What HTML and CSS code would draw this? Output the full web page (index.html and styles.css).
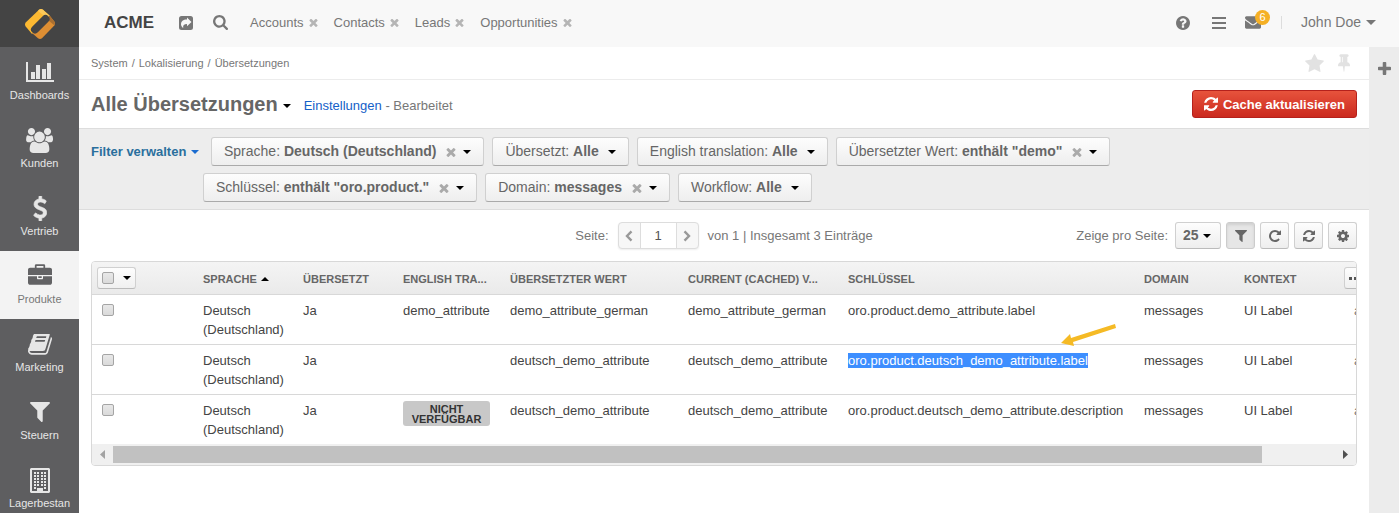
FILE: index.html
```html
<!DOCTYPE html>
<html lang="de">
<head>
<meta charset="utf-8">
<title>Alle Übersetzungen</title>
<link rel="stylesheet" href="styles.css">
</head>
<body>
<svg class="sprite" aria-hidden="true">
  <symbol id="i-times" viewBox="302 238 1188 1316"><path d="M1490 1322q0 40-28 68l-136 136q-28 28-68 28t-68-28l-294-294-294 294q-28 28-68 28t-68-28l-136-136q-28-28-28-68t28-68l294-294-294-294q-28-28-28-68t28-68l136-136q28-28 68-28t68 28l294 294 294-294q28-28 68-28t68 28l136 136q28 28 28 68t-28 68l-294 294 294 294q28 28 28 68z"/></symbol>
  <symbol id="i-plus" viewBox="192 128 1408 1408"><path d="M1600 736v192q0 40-28 68t-68 28h-416v416q0 40-28 68t-68 28h-192q-40 0-68-28t-28-68v-416h-416q-40 0-68-28t-28-68v-192q0-40 28-68t68-28h416v-416q0-40 28-68t68-28h192q40 0 68 28t28 68v416h416q40 0 68 28t28 68z"/></symbol>
  <symbol id="i-search" viewBox="64 128 1664 1664"><path d="M1216 832q0-185-131.5-316.5t-316.5-131.5-316.5 131.5-131.5 316.5 131.5 316.5 316.5 131.5 316.5-131.5 131.5-316.5zm512 832q0 52-38 90t-90 38q-54 0-90-38l-343-342q-179 124-399 124-143 0-273.5-55.5t-225-150-150-225-55.5-273.5 55.5-273.5 150-225 225-150 273.5-55.5 273.5 55.5 225 150 150 225 55.5 273.5q0 220-124 399l343 343q37 37 37 90z"/></symbol>
  <symbol id="i-share" viewBox="0 0 14 14"><path fill-rule="evenodd" d="M2.500 0h9A2.500 2.500 0 0 1 14 2.500v9a2.500 2.500 0 0 1-2.500 2.500h-9A2.500 2.500 0 0 1 0 11.500v-9A2.500 2.500 0 0 1 2.500 0zM8 1.500v2C4 3.500 2 5.300 2 8.200c0 1.500.8 2.800 2.200 3.800C3.800 9 5 8 8 8v2.300L12.500 6z"/></symbol>
  <symbol id="i-help" viewBox="128 128 1536 1536"><path d="M1024 1376v-192q0-14-9-23t-23-9h-192q-14 0-23 9t-9 23v192q0 14 9 23t23 9h192q14 0 23-9t9-23zm256-672q0-88-55.500-163t-138.500-116-170-41q-243 0-371 213-15 24 8 42l132 100q7 6 19 6 16 0 25-12 53-68 86-92 34-24 86-24 48 0 85.500 26t37.500 59q0 38-20 61t-68 45q-63 28-115.500 86.500t-52.500 125.500v36q0 14 9 23t23 9h192q14 0 23-9t9-23q0-19 21.500-49.500t54.500-49.500q32-18 49-28.500t46-35 44.500-48 28-60.500 12.500-81zm384 192q0 209-103 385.500t-279.500 279.500-385.500 103-385.500-103-279.500-279.500-103-385.500 103-385.500 279.500-279.500 385.500-103 385.500 103 279.500 279.500 103 385.500z"/></symbol>
  <symbol id="i-bars" viewBox="0 0 14 12"><path d="M0 0h14v2H0zM0 5h14v2H0zM0 10h14v2H0z"/></symbol>
  <symbol id="i-mail" viewBox="0 256 1792 1408"><path d="M1792 710v794q0 66-47 113t-113 47h-1472q-66 0-113-47t-47-113v-794q44 49 101 87 362 246 497 345 57 42 92.500 65.500t94.500 48 110 24.500h2q51 0 110-24.500t94.500-48 92.500-65.500q170-123 498-345 57-39 100-87zm0-294q0 79-49 151t-122 123q-376 261-468 325-10 7-42.500 31t-54 38.500-52 32.500-57.500 27-50 9h-2q-23 0-50-9t-57.500-27-52-32.500-54-38.500-42.500-31q-91-64-262-182.500t-205-142.500q-62-42-117-115.500t-55-136.500q0-78 41.500-130t118.500-52h1472q65 0 112.500 47t47.500 113z"/></symbol>
  <symbol id="i-star" viewBox="64 32 1664 1590"><path d="M1728 647q0 22-26 48l-363 354 86 500q1 7 1 20 0 21-10.500 35.500t-30.500 14.500q-19 0-40-12l-449-236-449 236q-22 12-40 12-21 0-31.500-14.500t-10.500-35.500q0-6 2-20l86-500-364-354q-25-27-25-48 0-37 56-46l502-73 225-455q19-41 49-41t49 41l225 455 502 73q56 9 56 46z"/></symbol>
  <symbol id="i-pin" viewBox="320 128 1152 1664"><path d="M800 864v-448q0-14-9-23t-23-9-23 9-9 23v448q0 14 9 23t23 9 23-9 9-23zm672 352q0 26-19 45t-45 19h-429l-51 483q-2 12-10.500 20.500t-20.500 8.500h-1q-27 0-32-27l-76-485h-404q-26 0-45-19t-19-45q0-123 78.500-221.500t177.500-98.500v-512q-52 0-90-38t-38-90 38-90 90-38h640q52 0 90 38t38 90-38 90-90 38v512q99 0 177.500 98.500t78.500 221.500z"/></symbol>
  <symbol id="i-refresh" viewBox="128 128 1536 1536"><path d="M1639 1056q0 5-1 7-64 268-268 434.500t-478 166.500q-146 0-282.500-55t-243.500-157l-129 129q-19 19-45 19t-45-19-19-45v-448q0-26 19-45t45-19h448q26 0 45 19t19 45-19 45l-137 137q71 66 161 102t187 36q134 0 250-65t186-179q11-17 53-117 8-23 30-23h192q13 0 22.500 9.500t9.500 22.500zm25-800v448q0 26-19 45t-45 19h-448q-26 0-45-19t-19-45 19-45l138-138q-148-137-349-137-134 0-250 65t-186 179q-11 17-53 117-8 23-30 23h-199q-13 0-22.500-9.500t-9.500-22.500v-7q65-268 270-434.500t480-166.500q146 0 284 55.500t245 156.500l130-129q19-19 45-19t45 19 19 45z"/></symbol>
  <symbol id="i-repeat" viewBox="128 128 1536 1536"><path d="M1664 256v448q0 26-19 45t-45 19h-448q-42 0-59-40-17-39 14-69l138-138q-148-137-349-137-104 0-198.500 40.500t-163.500 109.500-109.500 163.500-40.500 198.500 40.500 198.500 109.500 163.500 163.500 109.500 198.500 40.500q119 0 225-52t179-147q7-10 23-12 15 0 25 9l137 138q9 8 9.500 20.500t-7.500 22.500q-109 132-264 204.500t-327 72.500q-156 0-298-61t-245-164-164-245-61-298 61-298 164-245 245-164 298-61q147 0 284.500 55.500t244.500 156.500l130-129q29-31 70-14 39 17 39 59z"/></symbol>
  <symbol id="i-cog" viewBox="128 128 1536 1536"><path d="M1152 896q0-106-75-181t-181-75-181 75-75 181 75 181 181 75 181-75 75-181zm512-109v222q0 12-8 23t-20 13l-185 28q-19 54-39 91 35 50 107 138 10 12 10 25t-9 23q-27 37-99 108t-94 71q-12 0-26-9l-138-108q-44 23-91 38-16 136-29 186-7 28-36 28h-222q-14 0-24.500-8.500t-11.500-21.500l-28-184q-49-16-90-37l-141 107q-10 9-25 9-14 0-25-11-126-114-165-168-7-10-7-23 0-12 8-23 15-21 51-66.500t54-70.500q-27-50-41-99l-183-27q-13-2-21-12.500t-8-23.500v-222q0-12 8-23t19-13l186-28q14-46 39-92-40-57-107-138-10-12-10-24 0-10 9-23 26-36 98.500-107.500t94.500-71.500q13 0 26 10l138 107q44-23 91-38 16-136 29-186 7-28 36-28h222q14 0 24.500 8.500t11.500 21.500l28 184q49 16 90 37l142-107q9-9 24-9 13 0 25 10 129 119 165 170 7 8 7 22 0 12-8 23-15 21-51 66.500t-54 70.500q26 50 41 98l183 28q13 2 21 12.500t8 23.500z"/></symbol>
  <symbol id="i-filter" viewBox="190 256 1412 1408"><path d="M1595 295q17 41-14 70l-493 493v742q0 42-39 59-13 5-25 5-27 0-45-19l-256-256q-19-19-19-45v-486l-493-493q-31-29-14-70 17-39 59-39h1280q42 0 59 39z"/></symbol>
  <symbol id="i-chart" viewBox="0 0 28 22"><path d="M0 1h2v18h26v2H0zM5 11h4v7H5zM10 4h4v14h-4zM16 8h4v10h-4zM21 2h4v16h-4z"/></symbol>
  <symbol id="i-users" viewBox="64 0 1920 1792"><path d="M657 896q-162 5-265 128h-134q-82 0-138-40.500t-56-118.500q0-353 124-353 6 0 43.500 21t97.500 42.500 119 21.500q67 0 133-23-5 37-5 66 0 159 93 256zm1071 637q0 120-73 189.500t-194 69.500h-874q-121 0-194-69.500t-73-189.500q0-53 3.500-103.500t14-109 26.500-108.500 43-97.500 62-81 85.500-53.500 111.500-20q10 0 43 21.500t73 48 107 48 135 21.500 135-21.500 107-48 73-48 43-21.500q61 0 111.500 20t85.500 53.500 62 81 43 97.500 26.500 108.500 14 109 3.500 103.500zm-1024-1277q0 106-75 181t-181 75-181-75-75-181 75-181 181-75 181 75 75 181zm704 384q0 159-112.500 271.500t-271.500 112.500-271.500-112.500-112.500-271.500 112.500-271.500 271.500-112.500 271.500 112.500 112.500 271.500zm576 225q0 78-56 118.500t-138 40.500h-134q-103-123-265-128 93-97 93-256 0-29-5-66 66 23 133 23 59 0 119-21.500t97.500-42.500 43.500-21q124 0 124 353zm-128-609q0 106-75 181t-181 75-181-75-75-181 75-181 181-75 181 75 75 181z"/></symbol>
  <symbol id="i-dollar" viewBox="390 0 980 1792"><path stroke="currentColor" stroke-width="50" d="M1362 1185q0 153-99.500 263.500t-258.500 136.500v175q0 14-9 23t-23 9h-135q-13 0-22.500-9.500t-9.500-22.500v-175q-66-9-127.500-31t-101.500-44.500-74-48-46.500-37.500-17.500-18q-17-21-2-41l103-135q7-10 23-12 15-2 24 9l2 2q113 99 243 125 37 8 74 8 81 0 142.500-43t61.500-122q0-28-15-53t-33.500-42-58.500-37.500-66-32-80-32.500q-39-16-61.500-25t-61.500-26.500-62.500-31-56.500-35.500-53.500-42.500-43.500-49-35.500-58-21-66.500-8.500-78q0-138 98-242t255-134v-180q0-13 9.500-22.500t22.500-9.500h135q14 0 23 9t9 23v176q57 6 110.500 23t87 33.500 63.500 37.500 39 29 15 14q17 18 5 38l-81 146q-8 15-23 16-14 3-27-7-3-3-14.500-12t-39-26.500-58.500-32-74.500-26-85.500-11.500q-95 0-155 43t-60 111q0 26 8.500 48t29.500 41.500 39.500 33 56 31 60.500 27 70 27.500q53 20 81 31.500t76 35 75.500 42.500 62 50 53 63.500 31.500 76.500 13 94z"/></symbol>
  <symbol id="i-case" viewBox="0 0 1792 1536"><path d="M640 256h512v-128h-512v128zm1152 640v480q0 66-47 113t-113 47h-1472q-66 0-113-47t-47-113v-480h672v160q0 26 19 45t45 19h320q26 0 45-19t19-45v-160h672zm-768 0v128h-256v-128h256zm768-480v384h-1792v-384q0-66 47-113t113-47h352v-160q0-40 28-68t68-28h576q40 0 68 28t28 68v160h352q66 0 113 47t47 113z"/></symbol>
  <symbol id="i-book" viewBox="64 240 1664 1430"><path d="M1703 478q40 57 18 129l-275 906q-19 64-76.500 107.500t-122.500 43.500h-923q-77 0-148.500-53.500t-99.500-131.500q-24-67-2-127 0-4 3-27t4-37q1-8-3-21.500t-3-19.500q2-11 8-21t16.500-23.500 16.500-23.500q23-38 45-91.500t30-91.500q3-10 .5-30t-.5-28q3-11 17-28t17-23q21-36 42-92t25-90q1-9-2.500-32t.5-28q4-13 22-30.500t22-22.500q19-26 42.500-84.500t27.500-96.500q1-8-3-25.500t-2-26.500q2-8 9-18t18-23 17-21q8-12 16.500-30.500t15-35 16-36 19.500-32 26.500-23.500 36-11.500 47.500 5.500l-1 3q38-9 51-9h761q74 0 114 56t18 130l-274 906q-36 119-71.500 153.500t-128.500 34.500h-869q-27 0-38 15-11 16-1 43 24 70 144 70h923q29 0 56-15.500t35-41.500l300-987q7-22 5-57 38 15 59 43zm-1064 2q-4 13 2 22.500t20 9.500h608q13 0 25.500-9.500t16.500-22.500l21-64q4-13-2-22.500t-20-9.500h-608q-13 0-25.500 9.500t-16.500 22.500zm-83 256q-4 13 2 22.500t20 9.500h608q13 0 25.500-9.500t16.500-22.500l21-64q4-13-2-22.500t-20-9.500h-608q-13 0-25.500 9.500t-16.500 22.500z"/></symbol>
  <symbol id="i-building" viewBox="0 0 20 25"><path fill-rule="evenodd" d="M1 0h18l1 1v23l-1 1H1l-1-1V1zM2 2v21h5v-3h6v3h5V2z"/><path d="M4 4h2v2H4zM7 4h2v2H7zM11 4h2v2h-2zM14 4h2v2h-2zM4 7h2v2H4zM7 7h2v2H7zM11 7h2v2h-2zM14 7h2v2h-2zM4 10h2v2H4zM7 10h2v2H7zM11 10h2v2h-2zM14 10h2v2h-2zM4 13h2v2H4zM7 13h2v2H7zM11 13h2v2h-2zM14 13h2v2h-2zM4 16h2v2H4zM7 16h2v2H7zM11 16h2v2h-2zM14 16h2v2h-2zM4 19h2v2H4zM14 19h2v2h-2z"/></symbol>
  <symbol id="i-caret" viewBox="0 0 8 4"><path d="M0 0h8L4 4z"/></symbol>
  <symbol id="i-left" viewBox="0 0 8 12"><path d="M6.500 1.300 2 6l4.500 4.700" fill="none" stroke="currentColor" stroke-width="2.400"/></symbol>
  <symbol id="i-right" viewBox="0 0 8 12"><path d="M1.500 1.300 6 6l-4.500 4.700" fill="none" stroke="currentColor" stroke-width="2.400"/></symbol>
</svg>

<div class="app">
  <aside class="sidebar">
    <a class="logo" href="#" aria-label="Startseite">
      <svg width="30" height="30" viewBox="0 0 30 30">
        <path fill="#fcb932" d="M14 .8q2-1.500 4 0L25 7 7 25 .7 17.500q-1.400-2 0-4z"/>
        <path fill="#fcc95a" d="M14 .8q2-1.500 4 0L25 7l-3 2-9-7z"/>
        <path fill="#dd8e33" d="M25 7l4.300 5.500q1.400 2 0 4L17 29.200q-2 1.500-4 0L7 24z"/>
        <path fill="#a96f31" d="m24 6 5.300 6.500q1 2 .2 4L23 11z"/>
        <path stroke="#444" stroke-width="8" stroke-linecap="round" d="M20.500 10 10 20.500"/>
      </svg>
    </a>
    <nav class="menu">
      <a class="menu-item" href="#"><span class="menu-icon"><svg width="28" height="22"><use href="#i-chart"/></svg></span><span class="menu-label">Dashboards</span></a>
      <a class="menu-item" href="#"><span class="menu-icon"><svg width="27" height="25"><use href="#i-users"/></svg></span><span class="menu-label">Kunden</span></a>
      <a class="menu-item" href="#"><span class="menu-icon"><svg width="14" height="25"><use href="#i-dollar"/></svg></span><span class="menu-label">Vertrieb</span></a>
      <a class="menu-item active" href="#"><span class="menu-icon case"><svg width="24" height="21"><use href="#i-case"/></svg></span><span class="menu-label">Produkte</span></a>
      <a class="menu-item" href="#"><span class="menu-icon"><svg width="24" height="21"><use href="#i-book"/></svg></span><span class="menu-label">Marketing</span></a>
      <a class="menu-item" href="#"><span class="menu-icon"><svg width="20" height="20"><use href="#i-filter"/></svg></span><span class="menu-label">Steuern</span></a>
      <a class="menu-item" href="#"><span class="menu-icon"><svg width="20" height="25"><use href="#i-building"/></svg></span><span class="menu-label">Lagerbestand</span></a>
    </nav>
  </aside>

  <div class="main">
    <header class="topbar">
      <a class="brand" href="#">ACME</a>
      <button class="icon-btn share" aria-label="Teilen"><svg width="14" height="14"><use href="#i-share"/></svg></button>
      <button class="icon-btn search" aria-label="Suche"><svg width="15" height="15"><use href="#i-search"/></svg></button>
      <nav class="pins">
        <span class="pin"><a href="#">Accounts</a><button class="icon-btn" aria-label="Entfernen"><svg width="9" height="9"><use href="#i-times"/></svg></button></span>
        <span class="pin"><a href="#">Contacts</a><button class="icon-btn" aria-label="Entfernen"><svg width="9" height="9"><use href="#i-times"/></svg></button></span>
        <span class="pin"><a href="#">Leads</a><button class="icon-btn" aria-label="Entfernen"><svg width="9" height="9"><use href="#i-times"/></svg></button></span>
        <span class="pin"><a href="#">Opportunities</a><button class="icon-btn" aria-label="Entfernen"><svg width="9" height="9"><use href="#i-times"/></svg></button></span>
      </nav>
      <div class="tools">
        <button class="icon-btn" aria-label="Hilfe"><svg width="14" height="14"><use href="#i-help"/></svg></button>
        <button class="icon-btn" aria-label="Menü"><svg width="14" height="12"><use href="#i-bars"/></svg></button>
        <button class="icon-btn mail" aria-label="E-Mails"><svg width="16" height="13"><use href="#i-mail"/></svg><span class="badge">6</span></button>
        <button class="user">John Doe<svg width="10" height="5"><use href="#i-caret"/></svg></button>
      </div>
    </header>

    <div class="body">
      <main class="content">
        <div class="crumbs">
          <nav class="crumb-list"><a href="#">System</a><span>/</span><a href="#">Lokalisierung</a><span>/</span><a href="#">Übersetzungen</a></nav>
          <button class="icon-btn" aria-label="Favorit"><svg width="19" height="18"><use href="#i-star"/></svg></button>
          <button class="icon-btn" aria-label="Anheften"><svg width="12" height="18"><use href="#i-pin"/></svg></button>
        </div>

        <div class="title-row">
          <h1>Alle Übersetzungen</h1>
          <button class="icon-btn title-caret" aria-label="Ansichten"><svg width="8" height="4"><use href="#i-caret"/></svg></button>
          <p class="view-state"><a href="#">Einstellungen</a> - Bearbeitet</p>
          <button class="btn-danger"><svg width="14" height="14"><use href="#i-refresh"/></svg>Cache aktualisieren</button>
        </div>

        <section class="filters">
          <button class="manage">Filter verwalten<svg width="8" height="4"><use href="#i-caret"/></svg></button>
          <div class="filter-list">
            <div class="filter"><button class="filter-text">Sprache: <b>Deutsch (Deutschland)</b></button><button class="filter-clear" aria-label="Zurücksetzen"><svg width="10" height="10"><use href="#i-times"/></svg></button><svg width="8" height="4"><use href="#i-caret"/></svg></div>
            <div class="filter"><button class="filter-text">Übersetzt: <b>Alle</b></button><svg width="8" height="4"><use href="#i-caret"/></svg></div>
            <div class="filter"><button class="filter-text">English translation: <b>Alle</b></button><svg width="8" height="4"><use href="#i-caret"/></svg></div>
            <div class="filter"><button class="filter-text">Übersetzter Wert: <b>enthält "demo"</b></button><button class="filter-clear" aria-label="Zurücksetzen"><svg width="10" height="10"><use href="#i-times"/></svg></button><svg width="8" height="4"><use href="#i-caret"/></svg></div>
            <div class="filter"><button class="filter-text">Schlüssel: <b>enthält "oro.product."</b></button><button class="filter-clear" aria-label="Zurücksetzen"><svg width="10" height="10"><use href="#i-times"/></svg></button><svg width="8" height="4"><use href="#i-caret"/></svg></div>
            <div class="filter"><button class="filter-text">Domain: <b>messages</b></button><button class="filter-clear" aria-label="Zurücksetzen"><svg width="10" height="10"><use href="#i-times"/></svg></button><svg width="8" height="4"><use href="#i-caret"/></svg></div>
            <div class="filter"><button class="filter-text">Workflow: <b>Alle</b></button><svg width="8" height="4"><use href="#i-caret"/></svg></div>
          </div>
        </section>

        <div class="toolbar">
          <div class="pager">
            <label for="page">Seite:</label>
            <div class="pager-group">
              <button aria-label="Zurück"><svg width="8" height="12"><use href="#i-left"/></svg></button>
              <input id="page" type="text" value="1">
              <button aria-label="Weiter"><svg width="8" height="12"><use href="#i-right"/></svg></button>
            </div>
            <span>von 1 | Insgesamt 3 Einträge</span>
          </div>
          <div class="grid-actions">
            <label for="size">Zeige pro Seite:</label>
            <div class="select-wrap">
              <select id="size"><option>25</option></select>
              <svg width="8" height="4"><use href="#i-caret"/></svg>
            </div>
            <button class="tool pressed" aria-label="Filter"><svg width="12" height="12"><use href="#i-filter"/></svg></button>
            <button class="tool" aria-label="Aktualisieren"><svg width="12" height="12"><use href="#i-repeat"/></svg></button>
            <button class="tool" aria-label="Zurücksetzen"><svg width="12" height="12"><use href="#i-refresh"/></svg></button>
            <button class="tool" aria-label="Einstellungen"><svg width="12" height="12"><use href="#i-cog"/></svg></button>
          </div>
        </div>

        <div class="grid">
          <div class="grid-scroll">
            <table>
              <colgroup>
                <col class="c-check"><col class="c-s"><col class="c-s"><col class="c-en"><col class="c-value"><col class="c-current"><col class="c-key"><col class="c-s"><col class="c-s"><col class="c-actions">
              </colgroup>
              <thead>
                <tr>
                  <th><span class="check-all"><input type="checkbox" aria-label="Alle auswählen"><svg width="8" height="4"><use href="#i-caret"/></svg></span></th>
                  <th>Sprache <svg class="sort" width="8" height="4"><use href="#i-caret"/></svg></th>
                  <th>Übersetzt</th>
                  <th>English tra...</th>
                  <th>Übersetzter Wert</th>
                  <th>Current (cached) v...</th>
                  <th>Schlüssel</th>
                  <th>Domain</th>
                  <th>Kontext</th>
                  <th><button class="more" aria-label="Aktionen"><svg width="22" height="3" viewBox="0 0 22 3"><path d="M0 0h3v3H0zM5 0h3v3H5zM10 0h3v3h-3z"/></svg></button></th>
                </tr>
              </thead>
              <tbody>
                <tr>
                  <td><input type="checkbox" aria-label="Zeile 1"></td>
                  <td>Deutsch (Deutschland)</td><td>Ja</td><td>demo_attribute</td><td>demo_attribute_german</td><td>demo_attribute_german</td>
                  <td>oro.product.demo_attribute.label</td><td>messages</td><td>UI Label</td><td class="row-action">a</td>
                </tr>
                <tr>
                  <td><input type="checkbox" aria-label="Zeile 2"></td>
                  <td>Deutsch (Deutschland)</td><td>Ja</td><td></td><td>deutsch_demo_attribute</td><td>deutsch_demo_attribute</td>
                  <td class="key"><span class="selected">oro.product.deutsch_demo_attribute.label</span>
                    <svg class="arrow" width="57" height="22" viewBox="0 0 57 22"><path fill="#f5ba25" d="m0 19 9-9 1 4L54 0l1 4-43 14 1 4z"/></svg></td>
                  <td>messages</td><td>UI Label</td><td class="row-action">a</td>
                </tr>
                <tr>
                  <td><input type="checkbox" aria-label="Zeile 3"></td>
                  <td>Deutsch (Deutschland)</td><td>Ja</td><td><span class="na">Nicht verfügbar</span></td><td>deutsch_demo_attribute</td><td>deutsch_demo_attribute</td>
                  <td>oro.product.deutsch_demo_attribute.description</td><td>messages</td><td>UI Label</td><td class="row-action">a</td>
                </tr>
              </tbody>
            </table>
          </div>
          <div class="scrollbar">
            <svg width="5" height="9" viewBox="0 0 5 9"><path fill="#a3a3a3" d="M5 0v9L0 4.500z"/></svg>
            <div class="track"><div class="thumb"></div></div>
            <svg width="5" height="9" viewBox="0 0 5 9"><path fill="#505050" d="M0 0v9l5-4.500z"/></svg>
          </div>
        </div>
      </main>
      <aside class="rightbar"><button class="icon-btn" aria-label="Hinzufügen"><svg width="13" height="13"><use href="#i-plus"/></svg></button></aside>
    </div>
  </div>
</div>
</body>
</html>
```
FILE: styles.css
```css
* { box-sizing: border-box; }
body {
  margin: 0;
  font: 13px/19px "Liberation Sans", Arial, sans-serif;
  color: #777;
  background: #fff;
}
.sprite { position: absolute; width: 0; height: 0; }
svg { display: block; flex: none; fill: currentColor; }
a { color: inherit; text-decoration: none; }
button, input, select { font: inherit; color: inherit; margin: 0; }
button { cursor: pointer; padding: 0; border: 0; background: none; }
.icon-btn { display: flex; }

.app { display: flex; height: 100vh; overflow: hidden; }

/* sidebar */
.sidebar { flex: none; width: 79px; background: #5e5e60; color: #e6e6e6; }
.logo { display: flex; align-items: center; justify-content: center; height: 47px; background: #444; }
.menu-item { display: block; min-height: 68px; padding: 11px 8px 13px; text-align: center; }
.menu-icon { display: flex; align-items: center; justify-content: center; height: 28px; }
.menu-icon.case { padding-bottom: 4px; }
.menu-label { display: block; padding-top: 2px; font-size: 11px; line-height: 14px; word-break: break-all; }
.menu-item.active { background: #f3f3f3; color: #636365; }
.menu-item.active .menu-label { color: #777; }

/* top bar */
.main { flex: 1; min-width: 0; display: flex; flex-direction: column; }
.topbar { display: flex; align-items: center; height: 47px; padding: 0 23px 2px 25px; background: #f8f8f8; }
.brand { font-size: 17px; font-weight: bold; color: #444; }
.share { margin-left: 25px; color: #777; }
.search { margin-left: 20px; color: #777; }
.pins { display: flex; gap: 16px; margin-left: 22px; }
.pin { display: flex; align-items: center; gap: 5px; }
.pin .icon-btn { color: #b5b5b5; }
.tools { display: flex; align-items: center; gap: 22px; margin-left: auto; color: #777; }
.mail { position: relative; }
.badge {
  position: absolute; left: 10px; top: -6px;
  width: 15px; height: 15px; border-radius: 50%;
  background: #f5b025; color: #fff; font-size: 11px; line-height: 15px;
}
.tools .mail { margin-left: -3px; }
.user {
  display: flex; align-items: center; gap: 5px;
  padding-left: 19px; margin-left: -2px; border-left: 1px solid #ddd;
  font-size: 14px; line-height: 13px;
}

/* page */
.body { flex: 1; display: flex; min-height: 0; }
.content { flex: 1; min-width: 0; }
.rightbar { flex: none; width: 30px; padding-top: 15px; background: #ececec; color: #777; }
.rightbar .icon-btn { margin: 0 auto; }
.crumbs { display: flex; align-items: center; height: 33px; padding: 0 19px 0 12px; border-bottom: 1px solid #ececec; color: #e2e2e2; }
.crumb-list { display: flex; gap: 4px; flex: 1; font-size: 11px; color: #777; }
.crumbs .icon-btn + .icon-btn { margin-left: 14px; }
.title-row { display: flex; align-items: center; height: 48px; padding: 0 12px; }
h1 { margin: 0; font-size: 20px; line-height: 24px; color: #666; }
.title-caret { margin: 3px 0 0 5px; color: #000; }
.view-state { margin: 2px auto 0 13px; }
.view-state a { color: #1460c8; }
.btn-danger {
  display: flex; align-items: center; gap: 5px; height: 28px; padding: 0 11px;
  border: 1px solid #b5211c; border-radius: 3px;
  background: linear-gradient(#e7533c, #cb2a1f);
  color: #fff; font-weight: bold;
}

/* filters */
.filters { display: flex; align-items: flex-start; padding: 8px 12px 7px; border-top: 1px solid #ddd; border-bottom: 1px solid #ddd; background: #ededed; }
.manage { display: flex; align-items: center; gap: 5px; width: 112px; flex: none; height: 29px; font-weight: bold; color: #2a6f9d; white-space: nowrap; }
.manage svg { color: #1a6cd0; }
.filter-list { display: flex; flex-wrap: wrap; gap: 7px 8px; }
.filter {
  display: flex; align-items: center; height: 29px; padding: 0 12px;
  border: 1px solid #d0d0d0; border-bottom-color: #aaa; border-radius: 3px;
  background: linear-gradient(#fdfdfd, #eee);
  font-size: 14px; color: #666;
}
.filter:first-child { margin-left: 8px; }
.filter > svg { margin-left: 9px; color: #000; }
.filter-text { white-space: nowrap; }
.filter-clear { margin-left: 10px; color: #aaa; }
.filter .filter-clear + svg { margin-left: 7px; }

/* toolbar */
.toolbar { display: grid; grid-template-columns: 1fr auto 1fr; align-items: center; height: 51px; padding: 0 12px; }
.pager { grid-column: 2; display: flex; align-items: center; gap: 9px; }
.pager-group { display: flex; height: 27px; border: 1px solid #ddd; border-radius: 4px; background: #f7f7f7; box-shadow: 0 1px 2px #eee; }
.pager-group button { display: flex; align-items: center; justify-content: center; width: 21px; color: #999; }
.pager-group input { width: 37px; padding: 0; border: 0; border-left: 1px solid #ddd; border-right: 1px solid #ddd; background: #fff; color: #555; text-align: center; outline: 0; }
.grid-actions { grid-column: 3; display: flex; align-items: center; justify-content: flex-end; gap: 5px; }
.grid-actions label { margin-right: 2px; }
.select-wrap { position: relative; color: #000; }
.select-wrap svg { position: absolute; right: 10px; top: 12px; pointer-events: none; }
select, .tool {
  height: 27px; border: 1px solid #d0d0d0; border-bottom-color: #bbb; border-radius: 3px;
  background: linear-gradient(#fdfdfd, #eee); color: #666;
}
select { display: block; appearance: none; width: 46px; padding: 0 7px; font-size: 14px; font-weight: bold; }
.tool { display: flex; align-items: center; justify-content: center; width: 29px; }
.tool.pressed { background: #e6e6e6; box-shadow: inset 0 2px 3px #d0d0d0; border-color: #ccc; }

/* data grid */
.grid { margin: 0 12px; border: 1px solid #d8d8d8; border-radius: 4px; overflow: hidden; }
.grid-scroll { overflow: hidden; }
table { table-layout: fixed; width: 100%; min-width: 1352px; border-collapse: separate; border-spacing: 0; color: #444; }
.c-check { width: 101px; }
.c-s { width: 100px; }
.c-en { width: 107px; }
.c-value { width: 178px; }
.c-current { width: 160px; }
.c-key { width: 296px; }
th {
  height: 33px; padding: 2px 10px 0; border-bottom: 1px solid #d8d8d8;
  background: linear-gradient(#f4f4f4, #eaeaea);
  font-size: 11px; color: #666; text-align: left; text-transform: uppercase; white-space: nowrap;
}
th:first-child { padding: 0 5px; }
th:last-child { padding-top: 0; }
td { padding: 6px 10px 5px; vertical-align: top; border-bottom: 1px solid #d8d8d8; }
tr:last-child td { border-bottom: 0; }
input[type="checkbox"] {
  display: block; appearance: none; width: 12px; height: 12px; margin: 3px 0 0;
  border: 1px solid #a5a5a5; border-radius: 2px; background: linear-gradient(#e8e8e8, #dadada);
}
.sort { display: inline-block; margin: 0 0 2px 1px; transform: rotate(180deg); color: #000; }
.check-all {
  display: inline-flex; align-items: center; gap: 9px; height: 22px; padding: 0 4px; vertical-align: middle;
  border: 1px solid #d0d0d0; border-bottom-color: #bbb; border-radius: 3px; background: linear-gradient(#fdfdfd, #f0f0f0); color: #000;
}
.check-all input { margin: 0; }
.more {
  display: flex; align-items: center; width: 32px; height: 22px; padding: 0 4px; border: 1px solid #d0d0d0; border-bottom-color: #bbb; border-radius: 3px;
  background: linear-gradient(#fdfdfd, #f0f0f0); color: #555;
}
.row-action { padding-left: 20px; color: #777; }
.na {
  display: block; padding: 3px 5px 2px; border-radius: 3px; background: #c8c8c8; color: #333;
  font-size: 11px; font-weight: bold; line-height: 10px; text-align: center; text-transform: uppercase;
}
.key { position: relative; }
.selected { background: #3d8eff; color: #fff; }
.arrow { position: absolute; left: 223px; top: -21px; }
.scrollbar { display: flex; align-items: center; height: 21px; padding: 0 8px; gap: 8px; background: #f0f0f0; }
.track { flex: 1; height: 17px; }
.thumb { width: 94%; height: 17px; background: #c1c1c1; }
```
